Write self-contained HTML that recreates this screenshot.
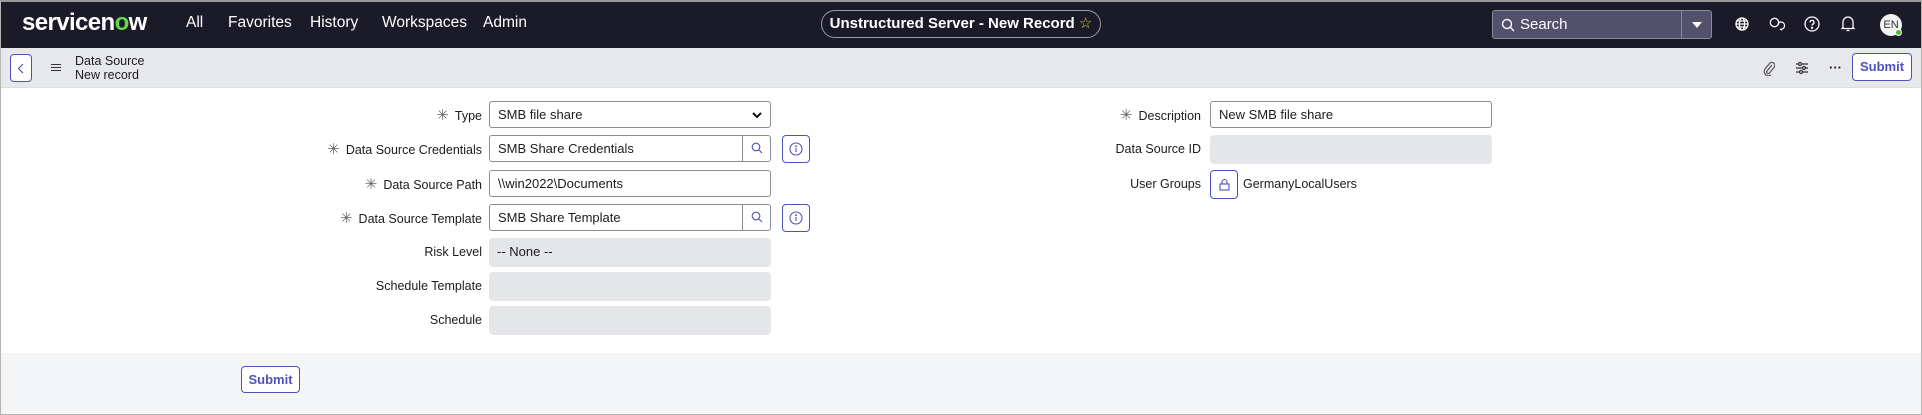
<!DOCTYPE html>
<html><head><meta charset="utf-8"><style>
*{box-sizing:border-box;margin:0;padding:0}
body{width:1922px;height:415px;overflow:hidden;font-family:"Liberation Sans",sans-serif;background:#fff;position:relative;color:#1b1b1f}
.frame{position:absolute;inset:0;border:1px solid #b5b5b5;border-top:2px solid #9a9a9a;pointer-events:none;z-index:9}
.nav{position:absolute;left:0;top:0;width:1922px;height:48px;background:#1b1a28;color:#fff}
.a{position:absolute}
.nav .it{position:absolute;top:14px;font-size:15.5px;color:#fff}
.logo{position:absolute;left:22px;top:9px;font-size:24px;font-weight:bold;letter-spacing:-0.6px;color:#fff}
.pill{position:absolute;left:821px;top:10px;width:280px;height:28px;border:1px solid #9a9aa6;border-radius:14px;color:#fff;font-size:15px;font-weight:bold;text-align:center;line-height:26px}
.search{position:absolute;left:1492px;top:10px;width:220px;height:29px;background:#52506a;border:1px solid #8a889c;border-radius:3px}
.sub{position:absolute;left:0;top:48px;width:1922px;height:40px;background:#e7e8ec;border-bottom:1px solid #dcdde2}
.btn{position:absolute;border:1px solid #4f52bd;border-radius:4px;background:#fff;color:#4f52bd;font-size:13px;font-weight:bold;text-align:center}
.lbl{position:absolute;font-size:12.5px;text-align:right;color:#1b1b1f;white-space:nowrap}
.lbl b{font-weight:normal;color:#666;margin-right:6px;font-size:15px}
.in{position:absolute;height:27px;border:1px solid #8a8c93;border-radius:3px;background:#fff;font-size:13px;line-height:25px;padding-left:8px}
.dis{background:#e5e6ea;border:none;border-radius:4px;line-height:27px}
.sb{position:absolute;right:0;top:0;width:28px;height:25px;border-left:1px solid #8a8c93}
.info{position:absolute;width:28px;height:28px;border:1px solid #4f52bd;border-radius:4px}
.foot{position:absolute;left:0;top:353px;width:1922px;height:62px;background:#f4f5f7}
</style></head><body>
<div class="nav">
 <div class="logo">servicen<span style="color:#62d84e">o</span>w</div>
 <div class="it" style="left:186px">All</div>
 <div class="it" style="left:228px">Favorites</div>
 <div class="it" style="left:310px">History</div>
 <div class="it" style="left:382px">Workspaces</div>
 <div class="it" style="left:483px">Admin</div>
 <div class="pill">Unstructured Server - New Record <span style="color:#e6c44a;font-weight:normal">☆</span></div>
 <div class="search">
  <svg class="a" style="left:8px;top:7px" width="14" height="14" viewBox="0 0 14 14" fill="none" stroke="#fff" stroke-width="1.4"><circle cx="6" cy="6" r="4.5"/><path d="M9.3 9.3L13 13"/></svg>
  <div class="a" style="left:27px;top:5px;font-size:15px;color:#fff">Search</div>
  <div class="a" style="left:188px;top:0;width:1px;height:27px;background:#8a889c"></div>
  <div class="a" style="left:199px;top:11px;width:0;height:0;border-left:5px solid transparent;border-right:5px solid transparent;border-top:6px solid #fff"></div>
 </div>
 <svg class="a" style="left:1735px;top:17px" width="14" height="14" viewBox="0 0 14 14" fill="none" stroke="#fff" stroke-width="1.3"><circle cx="7" cy="7" r="6"/><ellipse cx="7" cy="7" rx="2.6" ry="6"/><path d="M1 7h12M2 4h10M2 10h10"/></svg>
 <svg class="a" style="left:1769px;top:17px" width="16" height="14" viewBox="0 0 16 14" fill="none" stroke="#fff" stroke-width="1.3"><circle cx="5.5" cy="5.5" r="4.2"/><path d="M9 6.5a3.6 3.6 0 1 1 2 5.6l2 1"/></svg>
 <svg class="a" style="left:1804px;top:16px" width="16" height="16" viewBox="0 0 16 16" fill="none" stroke="#fff" stroke-width="1.3"><circle cx="8" cy="8" r="7"/><path d="M6 6.3a2 2 0 1 1 2.5 2c-.5.2-.5.6-.5 1.3"/><circle cx="8" cy="11.8" r=".5" fill="#fff"/></svg>
 <svg class="a" style="left:1841px;top:15px" width="14" height="17" viewBox="0 0 14 17" fill="none" stroke="#fff" stroke-width="1.3"><path d="M2 12.5V7a5 5 0 0 1 10 0v5.5l1 1H1z"/><path d="M5.5 15.5h3"/></svg>
 <div class="a" style="left:1880px;top:14px;width:22px;height:22px;border-radius:50%;background:#f2f2f2;color:#333;font-size:11px;text-align:center;line-height:22px">EN</div>
 <div class="a" style="left:1895px;top:29px;width:7px;height:7px;border-radius:50%;background:#5bb33a;border:1px solid #fff"></div>
</div>
<div class="sub">
 <div class="btn" style="left:10px;top:6px;width:22px;height:28px"><svg class="a" style="left:6px;top:8px" width="8" height="11" viewBox="0 0 8 11" fill="none" stroke="#4f52bd" stroke-width="1.2"><path d="M6 1L1.5 5.5 6 10"/></svg></div>
 <div class="a" style="left:51px;top:16px;width:10px;background:#333;box-shadow:0 3px 0 #333,0 6px 0 #333;height:1.4px"></div>
 <div class="a" style="left:75px;top:6px;font-size:12.5px;line-height:14px">Data Source<br>New record</div>
 <svg class="a" style="left:1763px;top:12px" width="12" height="16" viewBox="0 0 12 16" fill="none" stroke="#555" stroke-width="1.2"><path d="M9 5l-5 6a1.6 1.6 0 0 0 2.3 2.2L11 7.5a3 3 0 0 0-4.3-4.2L2 9a4.3 4.3 0 0 0 6 6"/></svg>
 <svg class="a" style="left:1795px;top:13px" width="14" height="14" viewBox="0 0 14 14" fill="none" stroke="#333" stroke-width="1.2"><path d="M1 3h12M1 7h12M1 11h12"/><circle cx="5" cy="3" r="1.5" fill="#e7e8ec"/><circle cx="9" cy="7" r="1.5" fill="#e7e8ec"/><circle cx="6" cy="11" r="1.5" fill="#e7e8ec"/></svg>
 <div class="a" style="left:1829px;top:12px;font-size:13px;font-weight:bold">···</div>
 <div class="btn" style="left:1852px;top:5px;width:60px;height:28px;line-height:26px">Submit</div>
</div>

<div class="lbl" style="right:1440px;top:106px"><b>✳</b>Type</div>
<div class="in" style="left:489px;top:101px;width:282px">SMB file share<svg class="a" style="right:8px;top:10px" width="10" height="7" viewBox="0 0 10 7" fill="none" stroke="#111" stroke-width="2"><path d="M1 1l4 4 4-4"/></svg></div>

<div class="lbl" style="right:1440px;top:140px"><b>✳</b>Data Source Credentials</div>
<div class="in" style="left:489px;top:135px;width:282px">SMB Share Credentials<div class="sb"><svg class="a" style="left:8px;top:6px" width="12" height="12" viewBox="0 0 12 12" fill="none" stroke="#4f52bd" stroke-width="1.1"><circle cx="5" cy="5" r="3.8"/><path d="M8 8l3 3"/></svg></div></div>
<div class="info" style="left:782px;top:135px"><svg class="a" style="left:6px;top:6px" width="14" height="14" viewBox="0 0 14 14" fill="none" stroke="#4f52bd" stroke-width="1.1"><circle cx="7" cy="7" r="6"/><path d="M7 6v4"/><circle cx="7" cy="4.2" r=".4"/></svg></div>

<div class="lbl" style="right:1440px;top:175px"><b>✳</b>Data Source Path</div>
<div class="in" style="left:489px;top:170px;width:282px">\\win2022\Documents</div>

<div class="lbl" style="right:1440px;top:209px"><b>✳</b>Data Source Template</div>
<div class="in" style="left:489px;top:204px;width:282px">SMB Share Template<div class="sb"><svg class="a" style="left:8px;top:6px" width="12" height="12" viewBox="0 0 12 12" fill="none" stroke="#4f52bd" stroke-width="1.1"><circle cx="5" cy="5" r="3.8"/><path d="M8 8l3 3"/></svg></div></div>
<div class="info" style="left:782px;top:204px"><svg class="a" style="left:6px;top:6px" width="14" height="14" viewBox="0 0 14 14" fill="none" stroke="#4f52bd" stroke-width="1.1"><circle cx="7" cy="7" r="6"/><path d="M7 6v4"/><circle cx="7" cy="4.2" r=".4"/></svg></div>

<div class="lbl" style="right:1440px;top:245px">Risk Level</div>
<div class="in dis" style="left:489px;top:238px;width:282px;height:29px">-- None --</div>
<div class="lbl" style="right:1440px;top:279px">Schedule Template</div>
<div class="in dis" style="left:489px;top:272px;width:282px;height:29px"></div>
<div class="lbl" style="right:1440px;top:313px">Schedule</div>
<div class="in dis" style="left:489px;top:306px;width:282px;height:29px"></div>

<div class="lbl" style="right:721px;top:106px"><b>✳</b>Description</div>
<div class="in" style="left:1210px;top:101px;width:282px">New SMB file share</div>
<div class="lbl" style="right:721px;top:142px">Data Source ID</div>
<div class="in dis" style="left:1210px;top:135px;width:282px;height:29px"></div>
<div class="lbl" style="right:721px;top:177px">User Groups</div>
<div class="info" style="left:1210px;top:170px;width:28px;height:29px"><svg class="a" style="left:8px;top:7px" width="11" height="13" viewBox="0 0 11 13" fill="none" stroke="#4f52bd" stroke-width="1.1"><rect x="1" y="6" width="9" height="6"/><path d="M3 6V4a2.5 2.5 0 0 1 5 0v2"/></svg></div>
<div class="a" style="left:1243px;top:177px;font-size:12.5px">GermanyLocalUsers</div>

<div class="foot"></div>
<div class="btn" style="left:241px;top:366px;width:59px;height:27px;line-height:25px">Submit</div>
<div class="frame"></div>
</body></html>
